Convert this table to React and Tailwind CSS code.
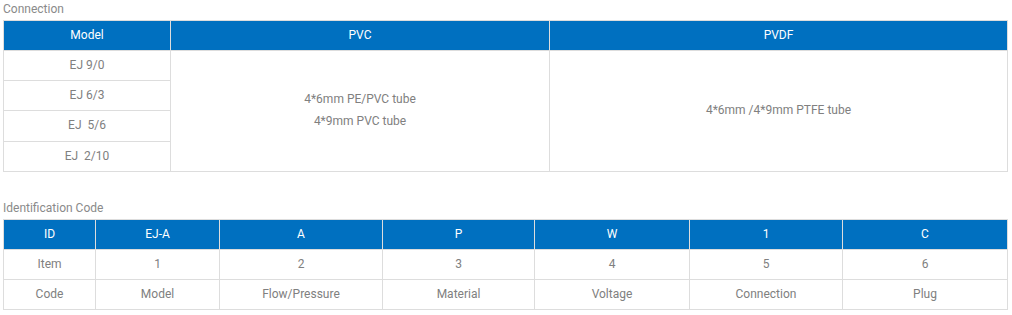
const th = "border border-[#dddddd] bg-[#0070c0] text-white font-normal h-[30px] pt-0 px-0 pb-[2px]";
const td = "border border-[#dddddd] h-[30px] pt-0 px-0 pb-[2px] text-center";

const idCols = [
  { w: "w-[92px]", head: "ID", item: "Item", code: "Code" },
  { w: "w-[124px]", head: "EJ-A", item: "1", code: "Model" },
  { w: "w-[163px]", head: "A", item: "2", code: "Flow/Pressure" },
  { w: "w-[152px]", head: "P", item: "3", code: "Material" },
  { w: "w-[155px]", head: "W", item: "4", code: "Voltage" },
  { w: "w-[153px]", head: "1", item: "5", code: "Connection" },
  { w: "w-[165px]", head: "C", item: "6", code: "Plug" },
];

export default function App() {
  return (
    <div className="bg-white w-[1012px] h-[315px] px-[3px] pt-[1px] font-['Roboto',sans-serif] text-[12px] text-[#808080]">
      <div className="leading-[16px] text-[#8a8a8a]">Connection</div>
      <table className="mt-[3px] w-[1005px] table-fixed border-collapse">
        <thead>
          <tr>
            <th className={`${th} w-[167px]`}>Model</th>
            <th className={`${th} w-[379px]`}>PVC</th>
            <th className={th}>PVDF</th>
          </tr>
        </thead>
        <tbody>
          <tr>
            <td className={td}>EJ 9/0</td>
            <td className={td} rowSpan={4}>
              <div className="leading-[22px]">4*6mm PE/PVC tube</div>
              <div className="leading-[22px]">4*9mm PVC tube</div>
            </td>
            <td className={td} rowSpan={4}>4*6mm /4*9mm PTFE tube</td>
          </tr>
          <tr><td className={td}>EJ 6/3</td></tr>
          <tr><td className={`${td} h-[31px] whitespace-pre`}>{"EJ  5/6"}</td></tr>
          <tr><td className={`${td} whitespace-pre`}>{"EJ  2/10"}</td></tr>
        </tbody>
      </table>

      <div className="mt-[28px] leading-[16px] text-[#8a8a8a]">Identification Code</div>
      <table className="mt-[3px] w-[1005px] table-fixed border-collapse">
        <thead>
          <tr>
            {idCols.map((c) => (
              <th key={c.head} className={`${th} ${c.w}`}>{c.head}</th>
            ))}
          </tr>
        </thead>
        <tbody>
          <tr>
            {idCols.map((c) => (
              <td key={c.head} className={td}>{c.item}</td>
            ))}
          </tr>
          <tr>
            {idCols.map((c) => (
              <td key={c.head} className={td}>{c.code}</td>
            ))}
          </tr>
        </tbody>
      </table>
    </div>
  );
}
